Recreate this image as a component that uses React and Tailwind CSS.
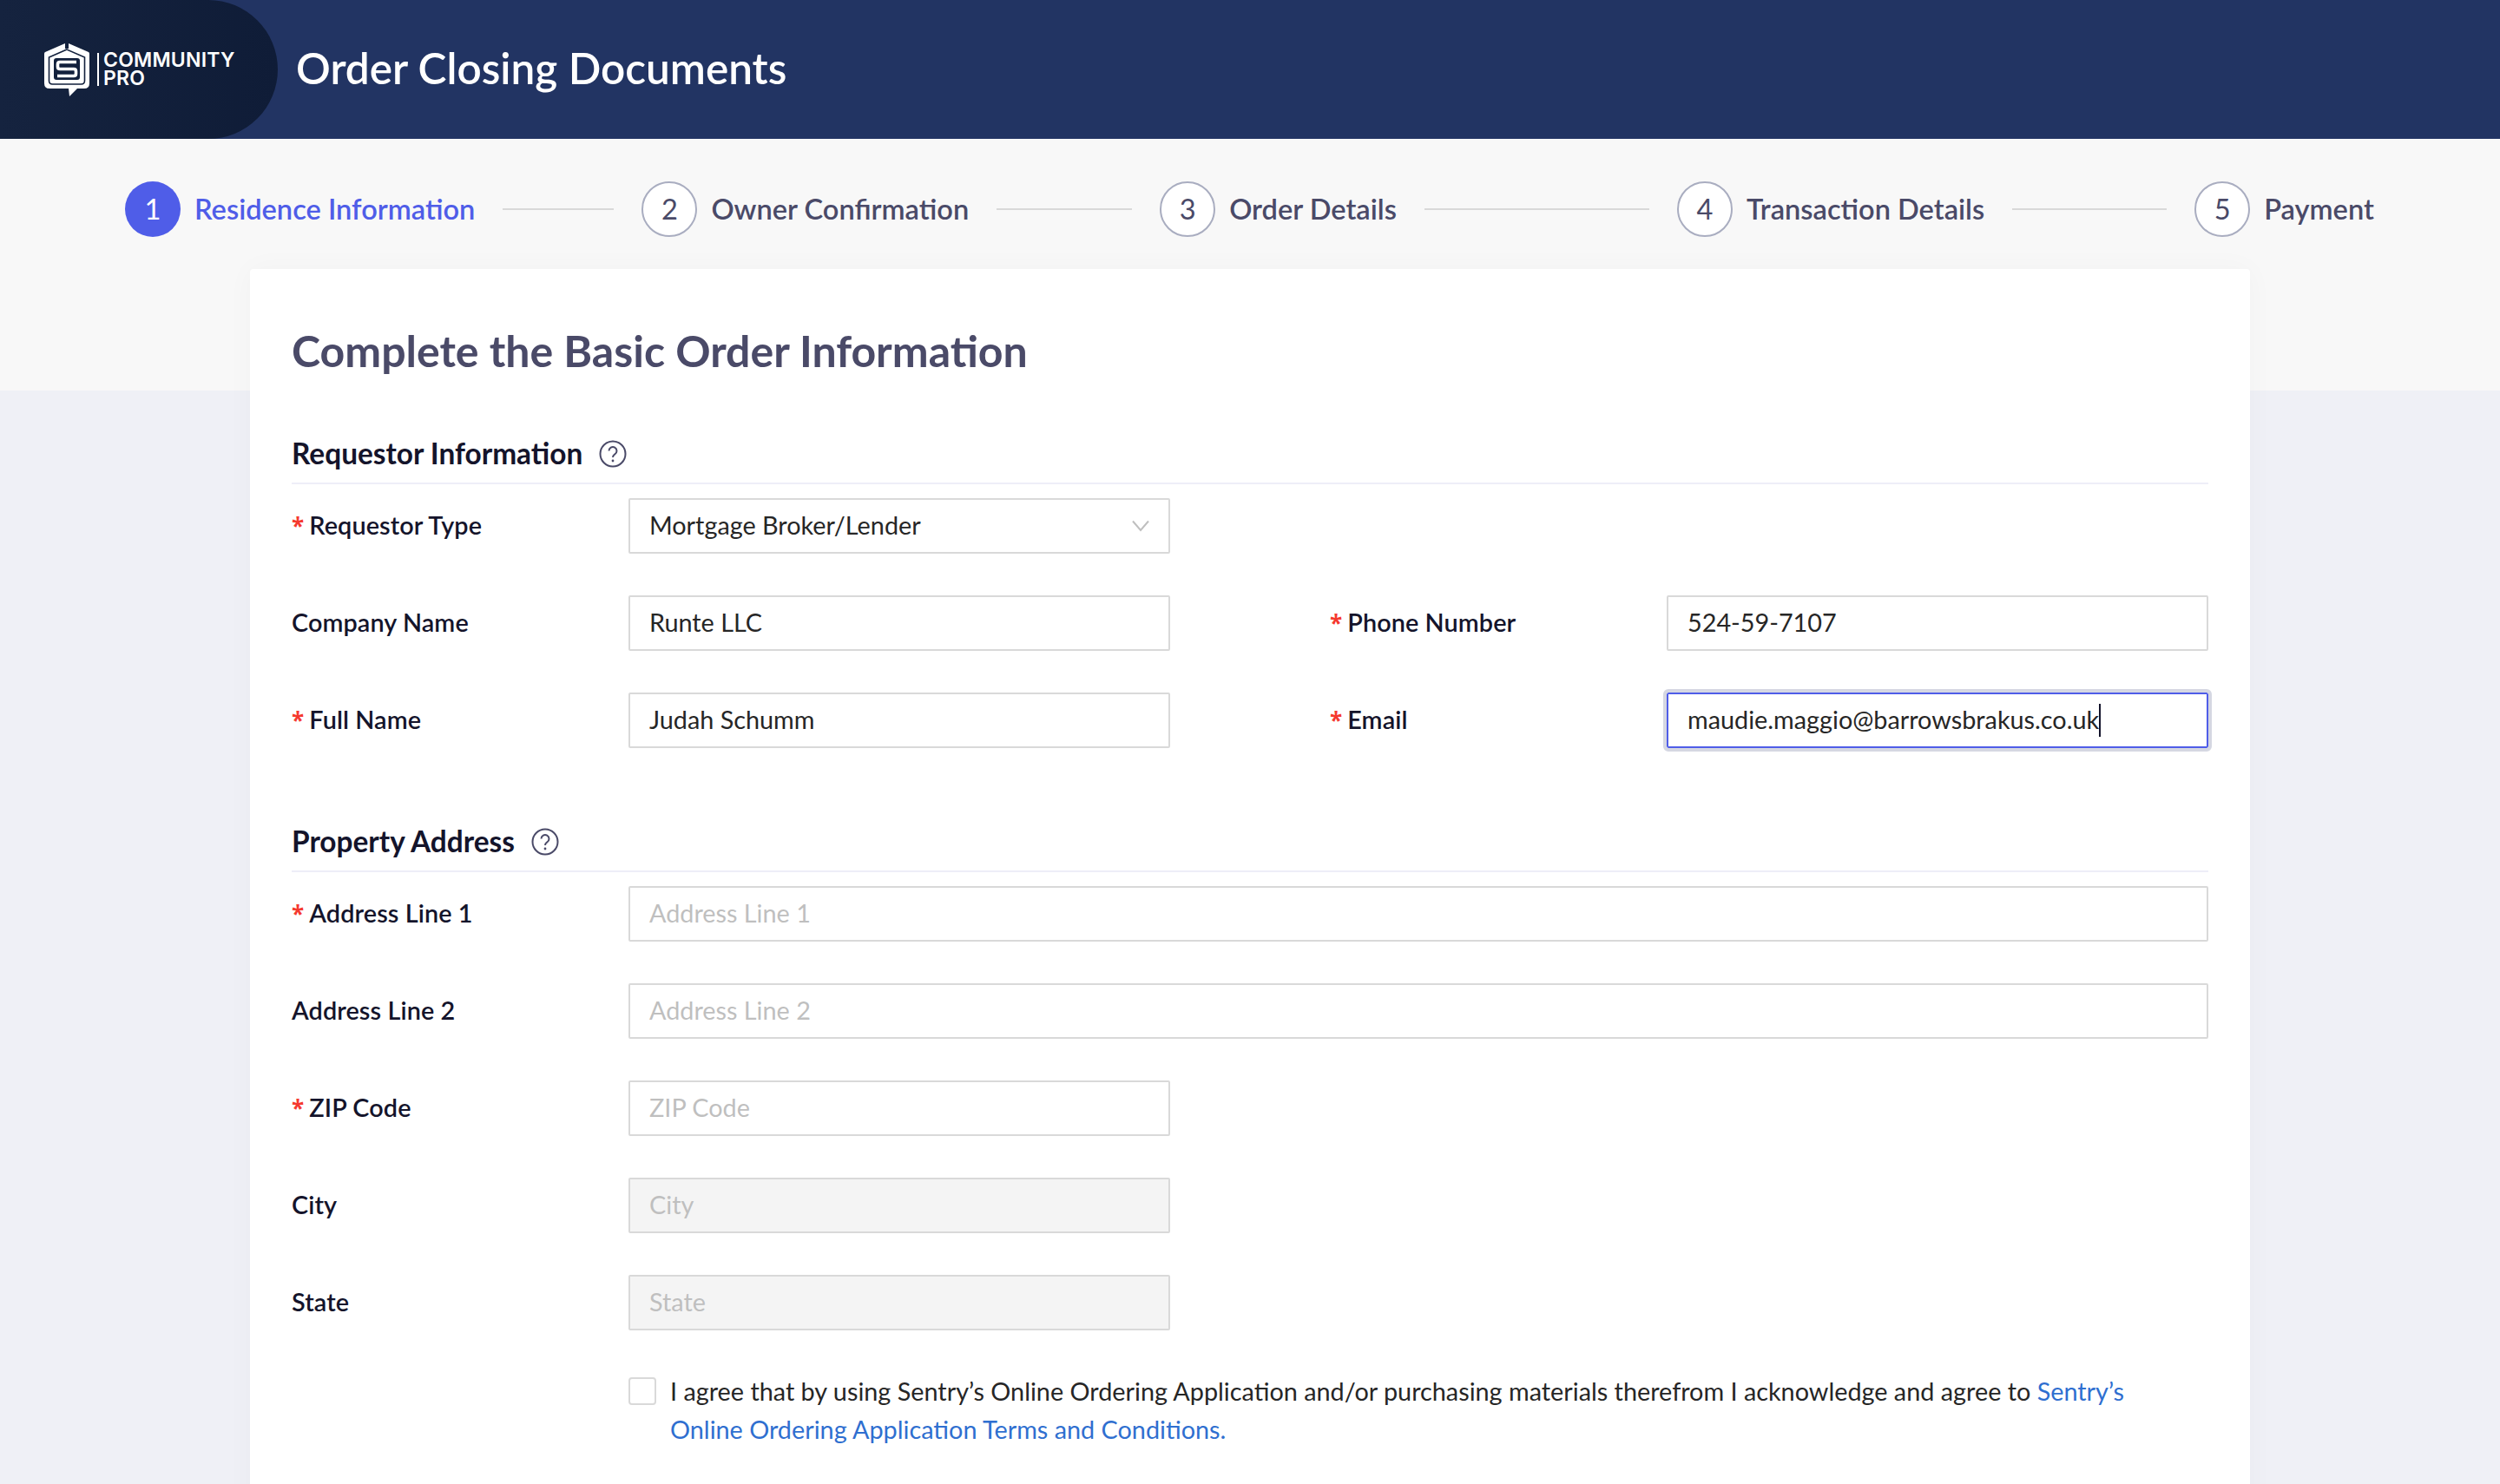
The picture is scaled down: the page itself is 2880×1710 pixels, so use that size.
const font = "font-['Lato','Noto_Sans',sans-serif]";

const steps = [
  { n: 1, label: 'Residence Information', line: 'w-[128px]' },
  { n: 2, label: 'Owner Confirmation', line: 'w-[156px]' },
  { n: 3, label: 'Order Details', line: 'w-[259px]' },
  { n: 4, label: 'Transaction Details', line: 'w-[178px]' },
  { n: 5, label: 'Payment' },
];

const Logo = () => (
  <div className="flex items-center">
    <svg width="54" height="63" viewBox="0 0 54 63" fill="none">
      <path d="M25 1 L2 11 Q1 11.500 1 13 V47 Q1 53 7 53 H29 L30 62 L39 53 H47 Q53 53 53 47 V13 Q53 11.500 52 11 L29 1 V7 H25 Z" fill="#fff" />
      <path d="M27 8 L6.500 17 V44 Q6.500 48 10.500 48 H43.500 Q47.500 48 47.500 44 V17 Z" stroke="#12203c" strokeWidth="1.6" />
      <rect x="12" y="18" width="30" height="25" rx="3" fill="#12203c" />
      <path d="M38 22.500 H19 Q16.500 22.500 16.500 25 V28 Q16.500 30.500 19 30.500 H35 Q37.500 30.500 37.500 33 V36 Q37.500 38.500 35 38.500 H16" stroke="#fff" strokeWidth="3.600" />
    </svg>
    <div className="w-[2px] h-[38px] bg-white ml-[8px] mr-[5px]" />
    <div className="font-['Inter',sans-serif] font-semibold text-white text-[23px] leading-[21px] tracking-[0.2px]">
      <div>COMMUNITY</div>
      <div>PRO</div>
    </div>
  </div>
);

const Help = () => (
  <svg width="32" height="32" viewBox="0 0 32 32" fill="none" className="ml-[19px]">
    <circle cx="16" cy="16" r="14.5" stroke="#4a4a68" strokeWidth="2" />
    <path d="M11.500 12.500 a4.500 4.500 0 1 1 6.800 3.900 c-1.500 .9 -2.300 1.700 -2.300 3.600" stroke="#4a4a68" strokeWidth="2" />
    <circle cx="16" cy="24" r="1.400" fill="#4a4a68" />
  </svg>
);

const Field = ({ label, required, value, placeholder, disabled, focused, select, wide }) => (
  <div className="flex items-center">
    <div className="w-[388px] pb-[1px] text-[28.800px] tracking-[0.1px] font-semibold text-[#14142b]">
      {required && <span className="font-['Open_Sans',sans-serif] text-[#f5392f] mr-[6px] font-bold text-[26px]">*</span>}
      {label}
    </div>
    <div
      className={`h-[64px] flex items-center justify-between px-[22px] pb-[1px] text-[28.800px] border-2 rounded-[2px] ${wide ? 'w-[1820px]' : 'w-[624px]'} ${focused ? 'border-[#4f5de8] outline-4 outline-[#d5d7e2]' : 'border-[#d9d9d9]'} ${disabled ? 'bg-[#f4f4f4]' : 'bg-white'} ${value ? 'text-[#262626]' : 'text-[#bfbfbf]'}`}
    >
      <span className="flex items-center">
        {value || placeholder}
        {focused && <span className="w-[2px] h-[38px] bg-[#14142b]" />}
      </span>
      {select && (
        <svg width="20" height="14" viewBox="0 0 20 14" fill="none">
          <path d="M1 1.500 L10 12 L19 1.500" stroke="#bfbfbf" strokeWidth="2" />
        </svg>
      )}
    </div>
  </div>
);

const SectionTitle = ({ children }) => (
  <div className="flex items-center h-[66px] pb-[3px] border-b-2 border-[#eeeef8] text-[33.400px] font-bold text-[#14142b]">
    {children}
    <Help />
  </div>
);

export default function App() {
  return (
    <div className={`${font} h-[1710px] overflow-hidden bg-[#eff0f6]`}>
      <header className="h-[160px] bg-[#223463] flex items-center">
        <div className="w-[320px] h-full rounded-r-[160px] bg-gradient-to-r from-[#15233f] to-[#0f1c37] flex items-center pl-[50px]">
          <Logo />
        </div>
        <h1 className="ml-[21px] -mt-[3px] text-[49.500px] font-semibold text-white">Order Closing Documents</h1>
      </header>

      <div className="h-[290px] bg-[#f8f8f8] pt-[49px] px-[144px]">
        <div className="flex items-center whitespace-nowrap">
          {steps.map((s) => (
            <div key={s.n} className="flex items-center">
              <div className={`w-[64px] h-[64px] shrink-0 rounded-full flex items-center justify-center text-[32.600px] ${s.n === 1 ? 'bg-[#4f5de8] text-white' : 'bg-white border-2 border-[#a9adc0] text-[#4a4a68]'}`}>
                {s.n}
              </div>
              <div className={`ml-[16px] text-[32.600px] font-semibold ${s.n === 1 ? 'text-[#4f5de8]' : 'text-[#4a4a68]'}`}>{s.label}</div>
              {s.line && <div className={`${s.line} shrink-0 h-[2px] bg-[#d9d9d9] mx-[32px]`} />}
            </div>
          ))}
        </div>
      </div>

      <main className="relative mx-[288px] -mt-[140px] h-[1600px] rounded-t-[4px] bg-white px-[48px] pt-[62px] shadow-[0_0_32px_rgba(0,0,0,0.03)]">
        <h2 className="text-[50px] leading-[64px] font-bold text-[#4a4a68]">Complete the Basic Order Information</h2>

        <div className="mt-[56px]">
          <SectionTitle>Requestor Information</SectionTitle>
        </div>
        <div className="mt-[16px] grid grid-cols-[1196px_1fr] gap-y-[48px]">
          <Field required label="Requestor Type" value="Mortgage Broker/Lender" select />
          <div />
          <Field label="Company Name" value="Runte LLC" />
          <Field required label="Phone Number" value="524-59-7107" />
          <Field required label="Full Name" value="Judah Schumm" />
          <Field required label="Email" value="maudie.maggio@barrowsbrakus.co.uk" focused />
        </div>

        <div className="mt-[77px]">
          <SectionTitle>Property Address</SectionTitle>
        </div>
        <div className="mt-[16px] flex flex-col gap-y-[48px]">
          <Field required label="Address Line 1" placeholder="Address Line 1" wide />
          <Field label="Address Line 2" placeholder="Address Line 2" wide />
          <Field required label="ZIP Code" placeholder="ZIP Code" />
          <Field label="City" placeholder="City" disabled />
          <Field label="State" placeholder="State" disabled />
        </div>

        <div className="mt-[48px] ml-[388px] flex items-start">
          <div className="w-[32px] h-[32px] shrink-0 mt-[6px] border-2 border-[#d9d9d9] rounded-[4px] bg-white" />
          <p className="ml-[16px] text-[28.800px] leading-[44px] text-[#262626]">
            I agree that by using Sentry’s Online Ordering Application and/or purchasing materials therefrom I acknowledge and agree to{' '}
            <span className="text-[#2f6fd0]">Sentry’s<br />Online Ordering Application Terms and Conditions.</span>
          </p>
        </div>
      </main>
    </div>
  );
}
